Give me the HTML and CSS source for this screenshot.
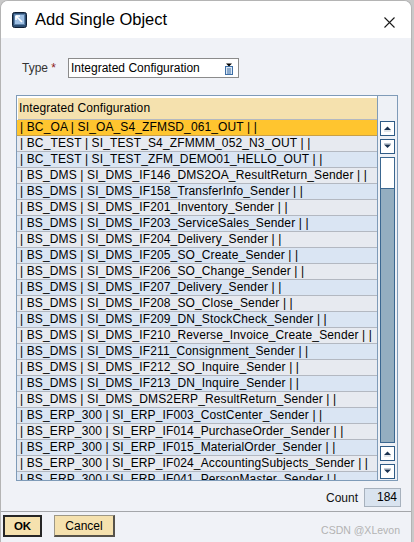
FILE: index.html
```html
<!DOCTYPE html>
<html>
<head>
    <meta charset="UTF-8">
    <title>Add Single Object</title>
    <link rel="stylesheet" href="styles.css">
</head>
<body>
    <div class="window">
        <div class="titlebar">
            <svg class="app-icon" viewBox="0 0 15 16">
                <rect x="0.5" y="0.5" width="14" height="15" rx="2" fill="#2c4d72" stroke="#0f1f35"/>
                <rect x="2.5" y="2.5" width="10" height="10" fill="#9fc0e4" stroke="#5b80a8"/>
                <path d="M4 4 L10 10 M4 4 H8 M4 4 V8" stroke="#ffffff" stroke-width="1.6" fill="none"/>
            </svg>
            <div class="title">Add Single Object</div>
            <svg class="close" viewBox="0 0 11 11">
                <path d="M0.5 0.5 L10.5 10.5 M10.5 0.5 L0.5 10.5" stroke="#1a1a1a" stroke-width="1.1"/>
            </svg>
        </div>
        <div class="content">
            <div class="type-row">
                <div class="type-label">Type <span class="req">*</span></div>
                <div class="select">
                    <span>Integrated Configuration</span>
                    <svg class="select-icon" viewBox="0 0 8 12">
                        <polygon points="1,0.5 7,0.5 4,3.5" fill="#000000"/>
                        <rect x="0.5" y="3.5" width="7" height="8" fill="#dbe7f5" stroke="#3d6ea5"/>
                        <path d="M2 6 H6 M2 8 H6 M2 10 H6" stroke="#3d6ea5" stroke-width="1"/>
                    </svg>
                </div>
            </div>
            <div class="table">
                <div class="list">
                    <div class="list-head">Integrated Configuration</div>
                    <div class="list-body">
                        <div class="row selected">| BC_OA | SI_OA_S4_ZFMSD_061_OUT | |</div>
                        <div class="row">| BC_TEST | SI_TEST_S4_ZFMMM_052_N3_OUT | |</div>
                        <div class="row">| BC_TEST | SI_TEST_ZFM_DEMO01_HELLO_OUT | |</div>
                        <div class="row">| BS_DMS | SI_DMS_IF146_DMS2OA_ResultReturn_Sender | |</div>
                        <div class="row">| BS_DMS | SI_DMS_IF158_TransferInfo_Sender | |</div>
                        <div class="row">| BS_DMS | SI_DMS_IF201_Inventory_Sender | |</div>
                        <div class="row">| BS_DMS | SI_DMS_IF203_ServiceSales_Sender | |</div>
                        <div class="row">| BS_DMS | SI_DMS_IF204_Delivery_Sender | |</div>
                        <div class="row">| BS_DMS | SI_DMS_IF205_SO_Create_Sender | |</div>
                        <div class="row">| BS_DMS | SI_DMS_IF206_SO_Change_Sender | |</div>
                        <div class="row">| BS_DMS | SI_DMS_IF207_Delivery_Sender | |</div>
                        <div class="row">| BS_DMS | SI_DMS_IF208_SO_Close_Sender | |</div>
                        <div class="row">| BS_DMS | SI_DMS_IF209_DN_StockCheck_Sender | |</div>
                        <div class="row">| BS_DMS | SI_DMS_IF210_Reverse_Invoice_Create_Sender | |</div>
                        <div class="row">| BS_DMS | SI_DMS_IF211_Consignment_Sender | |</div>
                        <div class="row">| BS_DMS | SI_DMS_IF212_SO_Inquire_Sender | |</div>
                        <div class="row">| BS_DMS | SI_DMS_IF213_DN_Inquire_Sender | |</div>
                        <div class="row">| BS_DMS | SI_DMS_DMS2ERP_ResultReturn_Sender | |</div>
                        <div class="row">| BS_ERP_300 | SI_ERP_IF003_CostCenter_Sender | |</div>
                        <div class="row">| BS_ERP_300 | SI_ERP_IF014_PurchaseOrder_Sender | |</div>
                        <div class="row">| BS_ERP_300 | SI_ERP_IF015_MaterialOrder_Sender | |</div>
                        <div class="row">| BS_ERP_300 | SI_ERP_IF024_AccountingSubjects_Sender | |</div>
                        <div class="row">| BS_ERP_300 | SI_ERP_IF041_PersonMaster_Sender | |</div>
                    </div>
                </div>
                <div class="scroll">
                    <div class="sbtn">
                        <svg viewBox="0 0 13 13"><path d="M3 9 H10" stroke="#c3ccd6"/><polygon points="3,8 10,8 6.5,4.5" fill="#1b3250"/></svg>
                    </div>
                    <div class="sbtn">
                        <svg viewBox="0 0 13 13"><path d="M3 3.5 H10" stroke="#c3ccd6"/><polygon points="3,4.5 10,4.5 6.5,8" fill="#1b3250"/></svg>
                    </div>
                    <div class="track"><div class="thumb"></div></div>
                    <div class="sbtn">
                        <svg viewBox="0 0 13 13"><path d="M3 9 H10" stroke="#c3ccd6"/><polygon points="3,8 10,8 6.5,4.5" fill="#1b3250"/></svg>
                    </div>
                    <div class="sbtn">
                        <svg viewBox="0 0 13 13"><path d="M3 3.5 H10" stroke="#c3ccd6"/><polygon points="3,4.5 10,4.5 6.5,8" fill="#1b3250"/></svg>
                    </div>
                </div>
            </div>
            <div class="count-row">
                <span class="count-label">Count</span>
                <div class="count-box">184</div>
            </div>
        </div>
        <div class="footer">
            <div class="btn btn-ok">OK</div>
            <div class="btn btn-cancel">Cancel</div>
            <div class="watermark">CSDN @XLevon</div>
        </div>
    </div>
</body>
</html>
```

FILE: styles.css
```css
*{
    margin: 0;
    padding: 0;
    box-sizing: border-box;
}
html,body{
    width: 100%;
    height: 100%;
}
body{
    background-color: #c9c9c9;
    font-family: "Liberation Sans", Arial, sans-serif;
    font-size: 12px;
    color: #000000;
    overflow: hidden;
}
.window{
    width: 412px;
    height: 542px;
    display: flex;
    flex-direction: column;
    background-color: #f0f2f7;
    border: 1px solid #b4b4b4;
    border-bottom: 0;
    border-radius: 8px 8px 0 0;
    overflow: hidden;
}
.titlebar{
    height: 37px;
    display: flex;
    align-items: center;
    padding: 0 16px 0 11px;
    background-color: #ffffff;
}
.app-icon{
    width: 15px;
    height: 16px;
    margin-right: 8px;
}
.title{
    font-size: 16.5px;
    color: #000000;
}
.close{
    width: 11px;
    height: 11px;
    margin-left: auto;
    margin-top: 6px;
}
.content{
    padding: 20px 10px 4px 15px;
}
.type-row{
    height: 20px;
    display: flex;
    align-items: center;
    padding-left: 6px;
}
.type-label{
    width: 46px;
    color: #333333;
}
.req{
    color: #8c1a1a;
}
.select{
    width: 171px;
    height: 20px;
    display: flex;
    align-items: center;
    justify-content: space-between;
    padding: 0 5px 0 2px;
    background-color: #ffffff;
    border: 1px solid #8b8b8b;
}
.select-icon{
    width: 8px;
    height: 12px;
    margin-top: 1px;
}
.table{
    width: 382px;
    height: 386px;
    margin-top: 17px;
    display: flex;
    background-color: #ffffff;
    border: 1px solid #7f9bb8;
}
.list{
    width: 360px;
    padding-top: 2px;
    display: flex;
    flex-direction: column;
}
.list-head{
    height: 22px;
    line-height: 21px;
    margin-left: 1px;
    padding-left: 1px;
    letter-spacing: 0.1px;
    background-color: #f5e1ae;
    border-bottom: 1px solid #b3b8c1;
}
.list-body{
    height: 360px;
    overflow: hidden;
}
.row{
    height: 16px;
    line-height: 15px;
    padding-left: 3px;
    letter-spacing: 0.13px;
    white-space: nowrap;
    overflow: hidden;
    border-bottom: 1px solid #b3b8c1;
}
.row:nth-child(odd){
    background-color: #dae5f3;
}
.row:nth-child(even){
    background-color: #e7eaf0;
}
.list-body .selected{
    background-color: #ffc52f;
    border-bottom-color: #c9a046;
}
.scroll{
    width: 20px;
    display: flex;
    flex-direction: column;
    gap: 3px;
    padding: 25px 0 0 2px;
    background-color: #eef1f6;
    border-left: 1px solid #7f9bb8;
}
.sbtn{
    width: 15px;
    height: 15px;
    background-color: #ffffff;
    border: 1px solid #2f5b86;
}
.sbtn svg{
    display: block;
    width: 13px;
    height: 13px;
}
.track{
    width: 15px;
    height: 286px;
    background-color: #94aec0;
    border: 1px solid #3b6790;
}
.thumb{
    height: 31px;
    background-color: #ffffff;
    border-bottom: 1px solid #3b6790;
}
.count-row{
    height: 19px;
    margin-top: 7px;
    display: flex;
    align-items: center;
    justify-content: flex-end;
    gap: 6px;
}
.count-label{
    color: #111111;
}
.count-box{
    width: 37px;
    height: 19px;
    line-height: 17px;
    padding-right: 3px;
    text-align: right;
    background-color: #d9e3ef;
    border: 1px solid #a7b1bd;
}
.footer{
    flex: 1;
    display: flex;
    align-items: flex-start;
    padding: 3px 11px 0 2px;
    border-top: 1px solid #a4a6aa;
}
.btn{
    height: 22px;
    display: flex;
    align-items: center;
    justify-content: center;
    background-color: #f5e1ae;
}
.btn-ok{
    width: 39px;
    font-size: 11.5px;
    font-weight: bold;
    border: 2px solid #262626;
}
.btn-cancel{
    width: 61px;
    margin-left: 12px;
    border: 1px solid #9d9786;
    border-right: 2px solid #56524a;
    border-bottom: 2px solid #56524a;
}
.watermark{
    margin-left: auto;
    padding-top: 9px;
    line-height: 12px;
    font-size: 10.5px;
    color: #b3b3b3;
}
```
